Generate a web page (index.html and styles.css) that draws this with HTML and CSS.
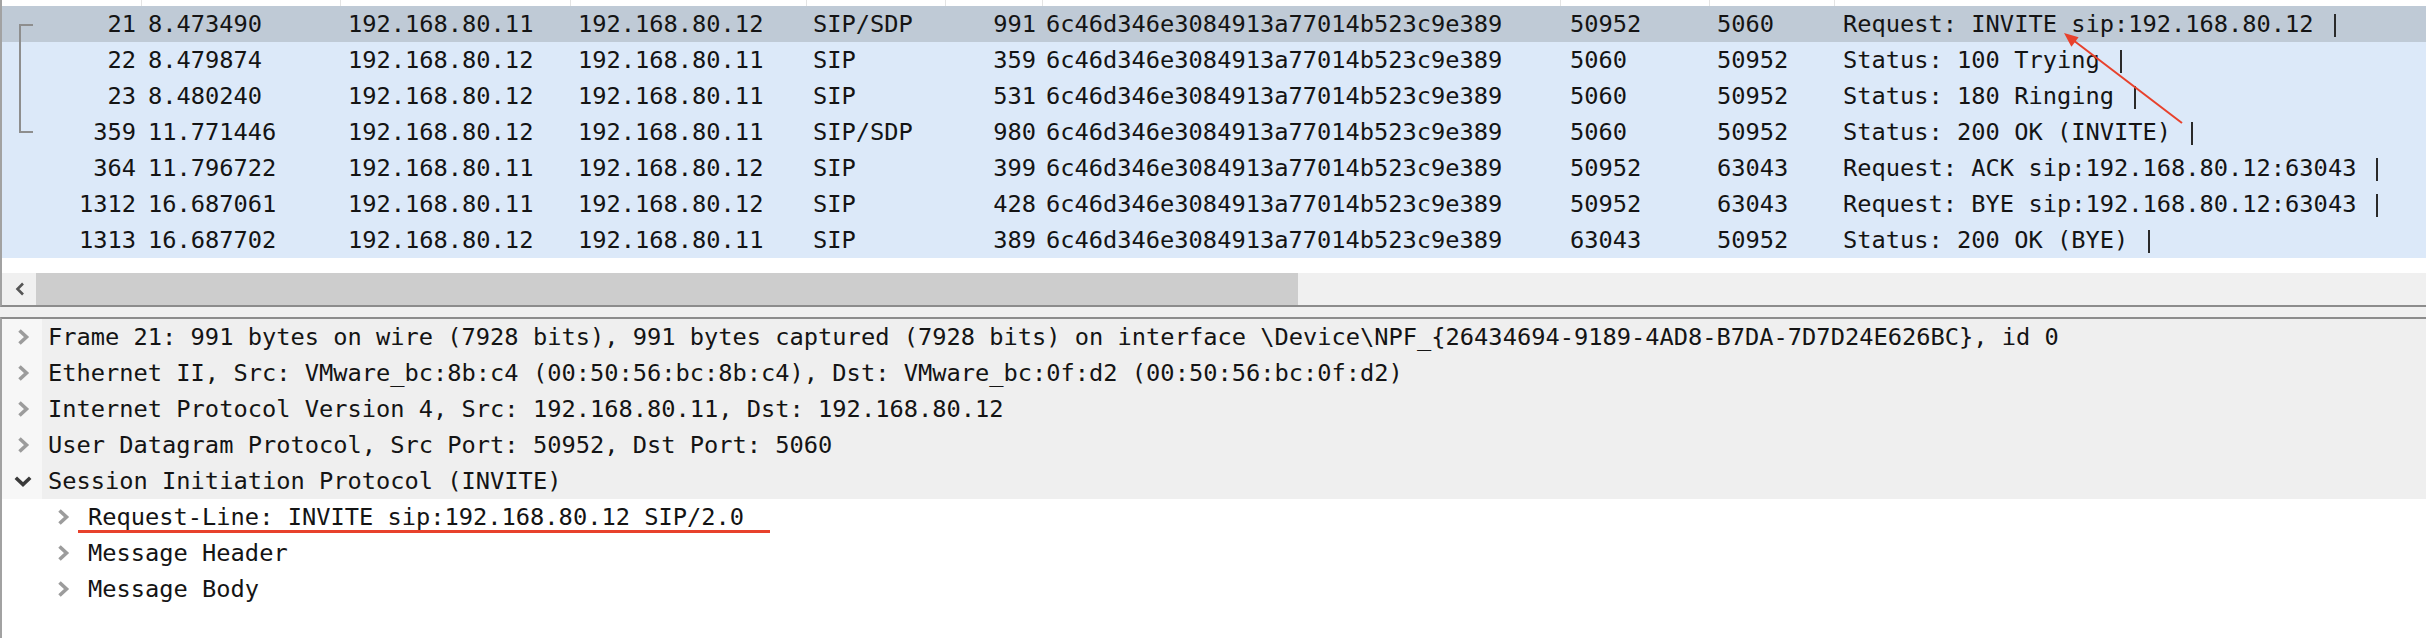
FILE: index.html
```html
<!DOCTYPE html>
<html>
<head>
<meta charset="utf-8">
<link rel="stylesheet" href="styles.css">
</head>
<body>
<div class="app">
  <section class="packet-list">
    <div class="grid head">
      <div class="hc"></div><div class="hc"></div><div class="hc"></div><div class="hc"></div><div class="hc"></div>
      <div class="hc"></div><div class="hc"></div><div class="hc"></div><div class="hc"></div><div class="hc last"></div>
    </div>
    <div class="grid row selected">
      <div class="c no"><span class="rel first"></span>21</div><div class="c time">8.473490</div><div class="c src">192.168.80.11</div><div class="c dst">192.168.80.12</div><div class="c proto">SIP/SDP</div><div class="c len">991</div><div class="c cid">6c46d346e3084913a77014b523c9e389</div><div class="c sport">50952</div><div class="c dport">5060</div><div class="c info">Request: INVITE sip:192.168.80.12<span class="bar"></span></div>
    </div>
    <div class="grid row">
      <div class="c no"><span class="rel mid"></span>22</div><div class="c time">8.479874</div><div class="c src">192.168.80.12</div><div class="c dst">192.168.80.11</div><div class="c proto">SIP</div><div class="c len">359</div><div class="c cid">6c46d346e3084913a77014b523c9e389</div><div class="c sport">5060</div><div class="c dport">50952</div><div class="c info">Status: 100 Trying<span class="bar"></span></div>
    </div>
    <div class="grid row">
      <div class="c no"><span class="rel mid"></span>23</div><div class="c time">8.480240</div><div class="c src">192.168.80.12</div><div class="c dst">192.168.80.11</div><div class="c proto">SIP</div><div class="c len">531</div><div class="c cid">6c46d346e3084913a77014b523c9e389</div><div class="c sport">5060</div><div class="c dport">50952</div><div class="c info">Status: 180 Ringing<span class="bar"></span></div>
    </div>
    <div class="grid row">
      <div class="c no"><span class="rel last"></span>359</div><div class="c time">11.771446</div><div class="c src">192.168.80.12</div><div class="c dst">192.168.80.11</div><div class="c proto">SIP/SDP</div><div class="c len">980</div><div class="c cid">6c46d346e3084913a77014b523c9e389</div><div class="c sport">5060</div><div class="c dport">50952</div><div class="c info">Status: 200 OK (INVITE)<span class="bar"></span></div>
    </div>
    <div class="grid row">
      <div class="c no">364</div><div class="c time">11.796722</div><div class="c src">192.168.80.11</div><div class="c dst">192.168.80.12</div><div class="c proto">SIP</div><div class="c len">399</div><div class="c cid">6c46d346e3084913a77014b523c9e389</div><div class="c sport">50952</div><div class="c dport">63043</div><div class="c info">Request: ACK sip:192.168.80.12:63043<span class="bar"></span></div>
    </div>
    <div class="grid row">
      <div class="c no">1312</div><div class="c time">16.687061</div><div class="c src">192.168.80.11</div><div class="c dst">192.168.80.12</div><div class="c proto">SIP</div><div class="c len">428</div><div class="c cid">6c46d346e3084913a77014b523c9e389</div><div class="c sport">50952</div><div class="c dport">63043</div><div class="c info">Request: BYE sip:192.168.80.12:63043<span class="bar"></span></div>
    </div>
    <div class="grid row">
      <div class="c no">1313</div><div class="c time">16.687702</div><div class="c src">192.168.80.12</div><div class="c dst">192.168.80.11</div><div class="c proto">SIP</div><div class="c len">389</div><div class="c cid">6c46d346e3084913a77014b523c9e389</div><div class="c sport">63043</div><div class="c dport">50952</div><div class="c info">Status: 200 OK (BYE)<span class="bar"></span></div>
    </div>
    <div class="list-spacer"></div>
    <div class="hscroll">
      <div class="sbtn">
        <svg width="10" height="14" viewBox="0 0 10 14"><polyline points="8,1.5 2.5,7 8,12.5" fill="none" stroke="#555555" stroke-width="2.6"/></svg>
      </div>
      <div class="thumb"></div>
      <div class="track"></div>
    </div>
  </section>

  <div class="splitter"></div>

  <section class="details">
    <div class="node top">
      <div class="tw"><svg class="chev" width="13" height="16" viewBox="0 0 13 16"><polyline points="2.5,1.5 9.5,8 2.5,14.5" fill="none" stroke="#9c9c9c" stroke-width="3.6"/></svg></div>
      <div class="label">Frame 21: 991 bytes on wire (7928 bits), 991 bytes captured (7928 bits) on interface \Device\NPF_{26434694-9189-4AD8-B7DA-7D7D24E626BC}, id 0</div>
    </div>
    <div class="node top">
      <div class="tw"><svg class="chev" width="13" height="16" viewBox="0 0 13 16"><polyline points="2.5,1.5 9.5,8 2.5,14.5" fill="none" stroke="#9c9c9c" stroke-width="3.6"/></svg></div>
      <div class="label">Ethernet II, Src: VMware_bc:8b:c4 (00:50:56:bc:8b:c4), Dst: VMware_bc:0f:d2 (00:50:56:bc:0f:d2)</div>
    </div>
    <div class="node top">
      <div class="tw"><svg class="chev" width="13" height="16" viewBox="0 0 13 16"><polyline points="2.5,1.5 9.5,8 2.5,14.5" fill="none" stroke="#9c9c9c" stroke-width="3.6"/></svg></div>
      <div class="label">Internet Protocol Version 4, Src: 192.168.80.11, Dst: 192.168.80.12</div>
    </div>
    <div class="node top">
      <div class="tw"><svg class="chev" width="13" height="16" viewBox="0 0 13 16"><polyline points="2.5,1.5 9.5,8 2.5,14.5" fill="none" stroke="#9c9c9c" stroke-width="3.6"/></svg></div>
      <div class="label">User Datagram Protocol, Src Port: 50952, Dst Port: 5060</div>
    </div>
    <div class="node top">
      <div class="tw"><svg class="chev down" width="18" height="11" viewBox="0 0 18 11"><polyline points="1.8,1.8 9,8.5 16.2,1.8" fill="none" stroke="#3a3a3a" stroke-width="3.6"/></svg></div>
      <div class="label">Session Initiation Protocol (INVITE)</div>
    </div>
    <div class="node child marked">
      <div class="tw"><svg class="chev" width="13" height="16" viewBox="0 0 13 16"><polyline points="2.5,1.5 9.5,8 2.5,14.5" fill="none" stroke="#9c9c9c" stroke-width="3.6"/></svg></div>
      <div class="label">Request-Line: INVITE sip:192.168.80.12 SIP/2.0</div>
      <div class="underline"></div>
    </div>
    <div class="node child">
      <div class="tw"><svg class="chev" width="13" height="16" viewBox="0 0 13 16"><polyline points="2.5,1.5 9.5,8 2.5,14.5" fill="none" stroke="#9c9c9c" stroke-width="3.6"/></svg></div>
      <div class="label">Message Header</div>
    </div>
    <div class="node child">
      <div class="tw"><svg class="chev" width="13" height="16" viewBox="0 0 13 16"><polyline points="2.5,1.5 9.5,8 2.5,14.5" fill="none" stroke="#9c9c9c" stroke-width="3.6"/></svg></div>
      <div class="label">Message Body</div>
    </div>
  </section>

  <svg class="annot" width="2426" height="638" viewBox="0 0 2426 638">
    <line x1="2182" y1="123" x2="2073" y2="40" stroke="#e8412c" stroke-width="2"/>
    <polygon points="2064,33 2078.6,37.2 2071.4,46.8" fill="#e8412c"/>
  </svg>
</div>
</body>
</html>
```

FILE: styles.css
```css
* { box-sizing: border-box; }
html, body { margin: 0; padding: 0; background: #ffffff; }
body {
  width: 2426px;
  height: 638px;
  overflow: hidden;
  font-family: "DejaVu Sans Mono", "Liberation Mono", monospace;
  font-size: 23.7px;
  color: #141414;
}
.app { position: relative; width: 2426px; height: 638px; overflow: hidden; display: flex; flex-direction: column; }

.packet-list {
  border-left: 2px solid #a2a2a2;
  border-bottom: 2px solid #8c8c8c;
  background: #ffffff;
  display: flex;
  flex-direction: column;
}
.grid {
  display: grid;
  grid-template-columns: 140px 199px 230px 236px 139px 97px 518px 149px 125px 1fr;
}
.head { height: 6px; background: #ffffff; }
.hc { border-right: 1px solid #e4e4e4; }
.hc.last { border-right: none; }

.row { height: 36px; line-height: 36px; background: #dce9f9; white-space: nowrap; }
.row.selected { background: #bfcad6; }
.c { overflow: visible; white-space: nowrap; }
.no { position: relative; text-align: right; padding-right: 6px; }
.time { padding-left: 6px; }
.src, .dst { padding-left: 7px; }
.proto { padding-left: 6px; }
.len { text-align: right; padding-right: 7px; }
.cid { padding-left: 3px; }
.sport { padding-left: 9px; }
.dport { padding-left: 7px; }
.info { padding-left: 8px; }
.bar {
  display: inline-block;
  width: 2px;
  height: 23px;
  background: #2a2a2a;
  margin-left: 20px;
  vertical-align: -5px;
}

.rel { position: absolute; left: 17px; width: 14px; border-color: #8e8e8e; border-style: solid; border-width: 0; }
.rel.first { top: 18px; bottom: 0; border-left-width: 2px; border-top-width: 2px; }
.rel.mid { top: 0; bottom: 0; border-left-width: 2px; }
.rel.last { top: 0; height: 19px; border-left-width: 2px; border-bottom-width: 2px; }

.list-spacer { height: 15px; background: #ffffff; }
.hscroll { height: 32px; display: flex; background: #f0f0f0; }
.sbtn { width: 34px; display: flex; align-items: center; justify-content: center; padding-left: 2px; }
.thumb { width: 1262px; background: #cdcdcd; }
.track { flex: 1; background: #f0f0f0; }

.splitter { height: 10px; background: #f0f0f0; }

.details {
  flex: 1;
  border-top: 2px solid #8c8c8c;
  border-left: 2px solid #a2a2a2;
  background: #ffffff;
}
.node { position: relative; height: 36px; line-height: 36px; display: flex; white-space: nowrap; }
.node.top .tw { width: 40px; background: #f7f7f7; display: flex; align-items: center; padding-left: 15px; }
.node.top .label { flex: 1; background: #efefef; padding-left: 6px; }
.node.top .tw .down { margin-left: -3px; }
.node.child .tw { width: 86px; display: flex; align-items: center; padding-left: 55px; }
.node.child .label { padding-left: 0; }
.underline {
  position: absolute;
  left: 76px;
  width: 692px;
  bottom: 2px;
  height: 3px;
  background: #e8412c;
}

.annot { position: absolute; left: 0; top: 0; pointer-events: none; }
```
